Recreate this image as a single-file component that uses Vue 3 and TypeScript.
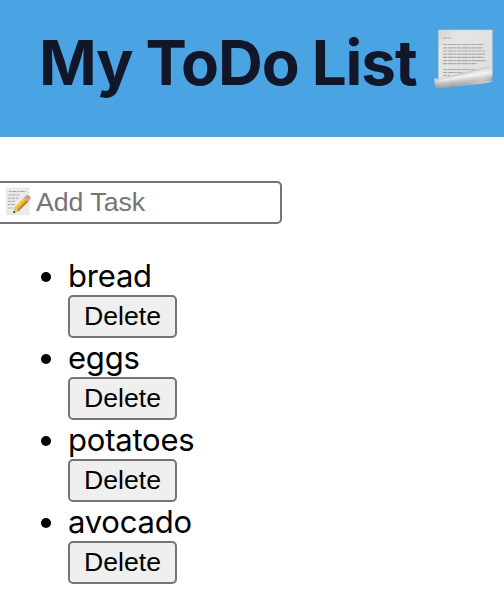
<script setup lang="ts">
import { ref } from 'vue'

interface Task {
  id: number
  text: string
}

const draft = ref('')
const tasks = ref<Task[]>([
  { id: 1, text: 'bread' },
  { id: 2, text: 'eggs' },
  { id: 3, text: 'potatoes' },
  { id: 4, text: 'avocado' },
])

function addTask(): void {
  const text = draft.value.trim()
  if (!text) return
  tasks.value.push({ id: Date.now(), text })
  draft.value = ''
}

function removeTask(id: number): void {
  tasks.value = tasks.value.filter((task) => task.id !== id)
}

// Printed lines of the letter: [y, width]
const letterLines: [number, number][] = [
  [15.5, 41], [18.8, 40], [22, 43], [25.2, 42], [28.4, 41], [31.6, 43], [34.6, 34], [40.5, 32], [43.5, 20], [46.5, 7],
]
</script>

<template>
  <div class="app">
    <header class="banner">
      <h1 class="title">My ToDo List</h1>
      <svg class="page-icon" viewBox="0 0 62 62" width="62" height="62" aria-hidden="true">
        <defs>
          <linearGradient id="sheet" x1="0" y1="0" x2="1" y2="1">
            <stop offset="0" stop-color="#d2d2d2" />
            <stop offset=".2" stop-color="#e5e5e5" />
            <stop offset="1" stop-color="#dedede" />
          </linearGradient>
          <linearGradient id="curl" gradientUnits="userSpaceOnUse" x1="28" y1="44.5" x2="30.4" y2="59">
            <stop offset="0" stop-color="#d5d5d5" />
            <stop offset=".25" stop-color="#ededed" />
            <stop offset=".5" stop-color="#bcbcbc" />
            <stop offset=".78" stop-color="#989898" />
            <stop offset="1" stop-color="#d0d0d0" />
          </linearGradient>
          <linearGradient id="shine" x1="0" y1="0" x2="1" y2="0">
            <stop offset="0" stop-color="#777" stop-opacity=".25" />
            <stop offset=".3" stop-color="#fff" stop-opacity=".05" />
            <stop offset=".85" stop-color="#fff" stop-opacity=".4" />
            <stop offset="1" stop-color="#fff" stop-opacity=".15" />
          </linearGradient>
        </defs>
        <path d="M5.5 1H59.3V47L5.5 55Z" fill="url(#sheet)" stroke="#c9cdd0" stroke-width=".6" />
        <path d="M10 9H18.5" stroke="#aaa" stroke-width="1" stroke-dasharray="4 .7" />
        <path
          v-for="[y, w] in letterLines"
          :key="y"
          :d="`M10 ${y}h${w}`"
          stroke="#aaa"
          stroke-width="1.2"
          stroke-dasharray="4 .6 6 .5 2.5 .6"
        />
        <path d="M6 50 57 37 56 42 6 53Z" fill="#aaa" opacity=".4" />
        <path
          d="M1 49Q2.5 48.8 4.3 50C22 48 42 42.5 57 38.2Q59 41 59.3 52.3Q57 53.7 51 54.3L5 59.5Q2.8 60 2.2 56.5Z"
          fill="url(#curl)"
        />
        <path
          d="M1 49Q2.5 48.8 4.3 50C22 48 42 42.5 57 38.2Q59 41 59.3 52.3Q57 53.7 51 54.3L5 59.5Q2.8 60 2.2 56.5Z"
          fill="url(#shine)"
        />
      </svg>
    </header>

    <form class="entry" @submit.prevent="addTask">
      <svg class="memo-icon" viewBox="0 0 27 29" width="27" height="29" aria-hidden="true">
        <defs>
          <linearGradient id="pencil" gradientUnits="userSpaceOnUse" x1="13.2" y1="14.5" x2="18.2" y2="19.5">
            <stop offset="0" stop-color="#ffdc6a" />
            <stop offset=".55" stop-color="#f4b92b" />
            <stop offset="1" stop-color="#a8701c" />
          </linearGradient>
        </defs>
        <path d="M1.3 1.2H24V27.6H1.3Z" fill="#ebebeb" stroke="#dedede" stroke-width=".6" />
        <g stroke="#a6a6a6" stroke-width="1" stroke-dasharray="2.5 .7 4 .8">
          <path d="M4 4.5H21M3.5 8H15M3 11.2H14M3 14.3H11M3 17.5H10M3 21H8" />
        </g>
        <path d="M8.2 26.2 9.4 20.2 19.2 10.2 23.4 14.4 13.6 24.2Z" fill="url(#pencil)" />
        <path d="M8.2 26.2 9.4 20.2 11.5 20.6 12.2 22.4 13.6 24.2Z" fill="#e5bf87" />
        <path d="M8.2 26.2 8.7 23.8 10.6 25.3Z" fill="#333" />
        <path d="M19 10.4 20.6 8.8 24.9 12.9 23.3 14.5Z" fill="#a8b0b4" />
        <path d="M20.6 8.8Q22.6 7.6 24.9 9.6 26.4 11.4 24.9 12.9Z" fill="#e8837c" />
      </svg>
      <input v-model="draft" class="field" type="text" placeholder="Add Task" />
    </form>

    <ul class="tasks">
      <li v-for="task in tasks" :key="task.id" class="task">
        <span class="label">{{ task.text }}</span>
        <button class="delete" type="button" @click="removeTask(task.id)">Delete</button>
      </li>
    </ul>
  </div>
</template>

<style>
body {
  background: #fff;
  overflow: hidden;
}
</style>

<style scoped>
.app {
  width: 504px;
  height: 598px;
  overflow: hidden;
  font-family: Inter, "Liberation Sans", sans-serif;
  color: #000;
}

.banner {
  display: flex;
  align-items: flex-start;
  box-sizing: border-box;
  height: 137px;
  padding: 29px 0 0 39px;
  background: #4aa3e3;
}

.title {
  flex: none;
  width: 394px;
  margin: -1px 0 0;
  font-size: 62px;
  font-weight: 700;
  line-height: 69px;
  letter-spacing: -1.1px;
  word-spacing: -0.5px;
  white-space: nowrap;
  color: #111729;
}

.page-icon {
  flex: none;
}

.entry {
  display: flex;
  align-items: center;
  box-sizing: border-box;
  width: 286px;
  height: 43px;
  margin: 44px 0 0 -4px;
  padding-left: 7px;
  border: 2px solid #757575;
  border-radius: 5px;
  background: #fff;
}

.memo-icon {
  flex: none;
  margin-bottom: 3px;
}

.field {
  flex: 1;
  min-width: 0;
  height: 35px;
  margin-left: 4px;
  padding: 0;
  border: 0;
  outline: 0;
  background: transparent;
  font: 26.67px "Liberation Sans", sans-serif;
}

.field::placeholder {
  color: #757575;
  opacity: 1;
}

.tasks {
  margin: 33px 0 0;
  padding: 0 0 0 68px;
  list-style: none;
}

.task {
  position: relative;
  height: 82px;
}

.task::before {
  content: "";
  position: absolute;
  top: 15px;
  left: -27px;
  width: 10px;
  height: 10px;
  border-radius: 50%;
  background: #000;
}

.label {
  display: block;
  height: 38px;
  font-size: 31px;
  line-height: 38px;
  letter-spacing: -0.2px;
}

.delete {
  display: block;
  box-sizing: border-box;
  width: 109px;
  height: 43px;
  padding: 0;
  border: 2px solid #757575;
  border-radius: 5px;
  background: #efefef;
  color: #000;
  font: 26.67px "Liberation Sans", sans-serif;
}
</style>
